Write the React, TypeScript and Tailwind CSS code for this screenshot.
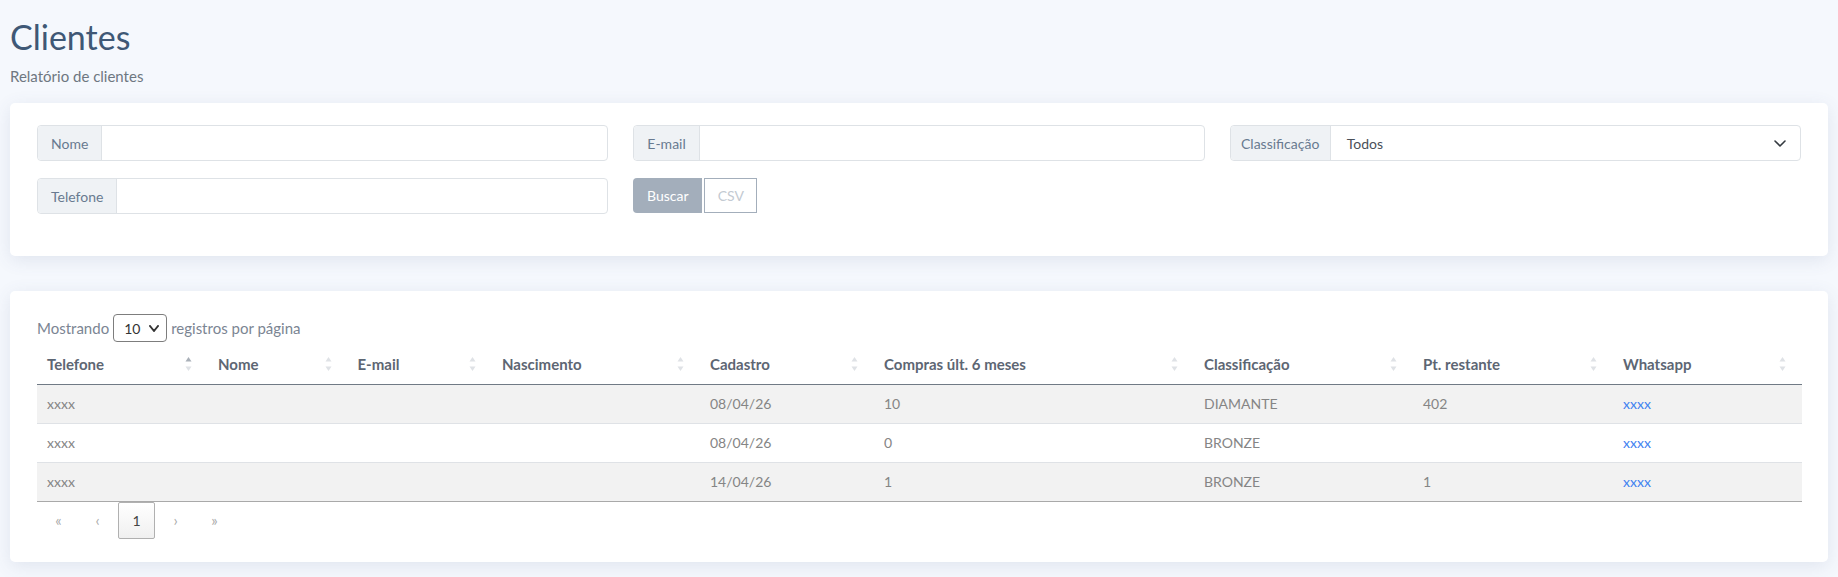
import React from "react";

const font = { fontFamily: "Lato, 'Open Sans', 'Liberation Sans', sans-serif" };

function SortIcon({ active }: { active?: boolean }) {
  return (
    <svg width="7" height="15" viewBox="0 0 7 15" className="absolute right-[16px] top-1/2 -translate-y-1/2">
      <path d="M3.5 0.5 L6.5 5 L0.5 5 Z" fill={active ? "#a9b0b8" : "#dfe2e6"} />
      <path d="M0.5 10 L6.5 10 L3.5 14.5 Z" fill="#dfe2e6" />
    </svg>
  );
}

function Chevron({ width = 12, height = 7, stroke = "#343a40", w = 1.6 }: { width?: number; height?: number; stroke?: string; w?: number }) {
  return (
    <svg width={width} height={height} viewBox={`0 0 ${width} ${height}`} fill="none">
      <path
        d={`M1 1 L${width / 2} ${height - 1} L${width - 1} 1`}
        stroke={stroke}
        strokeWidth={w}
        strokeLinecap="round"
        strokeLinejoin="round"
      />
    </svg>
  );
}

function LabeledInput({ label }: { label: string }) {
  return (
    <div className="flex h-[36px] rounded-[4px] border border-[#dee2e6] bg-white">
      <div className="flex shrink-0 items-center justify-center rounded-l-[4px] border-r border-[#dee2e6] bg-[#eff2f5] px-[13px] text-[14px] text-[#687a90]">
        {label}
      </div>
      <div className="flex-1" />
    </div>
  );
}

const cols = [
  { name: "Telefone", w: 171, active: true },
  { name: "Nome", w: 139.5 },
  { name: "E-mail", w: 144.5 },
  { name: "Nascimento", w: 208 },
  { name: "Cadastro", w: 174 },
  { name: "Compras últ. 6 meses", w: 320 },
  { name: "Classificação", w: 219 },
  { name: "Pt. restante", w: 200 },
  { name: "Whatsapp", w: 189 },
];

const rows = [
  ["xxxx", "", "", "", "08/04/26", "10", "DIAMANTE", "402", "xxxx"],
  ["xxxx", "", "", "", "08/04/26", "0", "BRONZE", "", "xxxx"],
  ["xxxx", "", "", "", "14/04/26", "1", "BRONZE", "1", "xxxx"],
];

export default function App() {
  return (
    <div style={font} className="min-h-[577px] w-full bg-[#f5f8fd] px-[10px] pb-[15px]">
      <h1 className="pt-[17px] text-[34px] leading-[40px] font-normal text-[#3f5876]">Clientes</h1>
      <p className="mt-[9px] text-[15px] leading-[20px] text-[#6e7781]">Relatório de clientes</p>

      <div className="mt-[17px] rounded-[5px] bg-white px-[27px] pt-[22px] pb-[42px] shadow-[0_4px_18px_rgba(70,90,130,0.12)]">
        <div className="grid grid-cols-3 gap-x-[25px] gap-y-[17px]">
          <LabeledInput label="Nome" />
          <LabeledInput label="E-mail" />
          <div className="flex h-[36px] rounded-[4px] border border-[#dee2e6] bg-white">
            <div className="flex w-[100px] shrink-0 items-center justify-center rounded-l-[4px] border-r border-[#dee2e6] bg-[#eff2f5] text-[14px] text-[#687a90]">
              Classificação
            </div>
            <div className="flex flex-1 items-center justify-between pl-[16px] pr-[14px] text-[14px] text-[#4a5058]">
              <span>Todos</span>
              <Chevron />
            </div>
          </div>
          <LabeledInput label="Telefone" />
          <div className="flex h-[35px] items-stretch gap-[2px]">
            <div className="flex w-[69px] items-center justify-center rounded-l-[4px] bg-[#a3aebb] text-[14px] text-white">
              Buscar
            </div>
            <div className="flex w-[53px] items-center justify-center border border-[#a3aebb] text-[14px] text-[#c3cad2]">
              CSV
            </div>
          </div>
        </div>
      </div>

      <div className="mt-[35px] rounded-[5px] bg-white px-[27px] pt-[23px] pb-[23px] shadow-[0_4px_18px_rgba(70,90,130,0.12)]">
        <div className="flex h-[28px] items-center text-[15px] text-[#7b8593]">
          <span>Mostrando</span>
          <div className="mx-[4px] flex h-[28px] w-[54px] items-center justify-between rounded-[4px] border border-[#7d7d7d] pl-[10px] pr-[7px] text-[14px] text-[#333]">
            <span>10</span>
            <Chevron width={10} height={7} stroke="#333" w={2} />
          </div>
          <span>registros por página</span>
        </div>

        <table className="mt-[2px] w-full table-fixed border-collapse">
          <colgroup>
            {cols.map((c) => (
              <col key={c.name} style={{ width: c.w }} />
            ))}
          </colgroup>
          <thead>
            <tr className="h-[40px] border-b border-[#707a85]">
              {cols.map((c) => (
                <th key={c.name} className="relative px-[10px] text-left text-[15px] font-bold text-[#5d6673]">
                  {c.name}
                  <SortIcon active={c.active} />
                </th>
              ))}
            </tr>
          </thead>
          <tbody className="text-[14px]">
            {rows.map((r, i) => (
              <tr
                key={i}
                className={`h-[39px] border-b ${i === rows.length - 1 ? "border-[#a9a9a9]" : "border-[#dfe2e6]"} ${
                  i % 2 === 0 ? "bg-[#f2f2f2]" : "bg-white"
                }`}
              >
                {r.map((v, j) => (
                  <td key={j} className={`px-[10px] ${j === 8 ? "text-[#3f82f0]" : "text-[#858585]"}`}>
                    {v}
                  </td>
                ))}
              </tr>
            ))}
          </tbody>
        </table>

        <div className="ml-[3px] flex h-[37px] gap-[2px] text-[15px]">
          <div className="flex w-[37px] items-center justify-center text-[#a9a9a9]">«</div>
          <div className="flex w-[37px] items-center justify-center text-[#a9a9a9]">‹</div>
          <div className="flex w-[37px] items-center justify-center rounded-[2px] border border-[#b0b0b0] bg-gradient-to-b from-white to-[#f0f0f0] text-[14px] text-[#444]">
            1
          </div>
          <div className="flex w-[37px] items-center justify-center text-[#a9a9a9]">›</div>
          <div className="flex w-[37px] items-center justify-center text-[#a9a9a9]">»</div>
        </div>
      </div>
    </div>
  );
}
